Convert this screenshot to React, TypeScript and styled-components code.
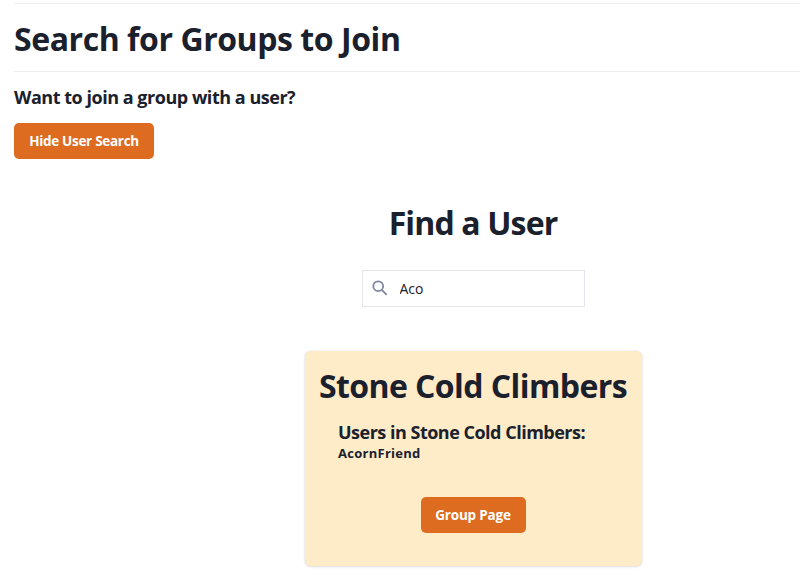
import React, { useState } from "react";
import styled, { createGlobalStyle } from "styled-components";

const fontStack = `"Segoe UI", "Open Sans", "Noto Sans", sans-serif`;

const GlobalStyle = createGlobalStyle`
  *, *::before, *::after { box-sizing: border-box; }
  body {
    margin: 0;
    background: #fff;
    color: #1a202c;
    font-family: ${fontStack};
  }
  h1, h3, p { margin: 0; }
`;

const Page = styled.main`
  min-height: 588px;
  padding: 3px 0 0 14px;
`;

const TitleBar = styled.header`
  height: 69px;
  padding-top: 13px;
  border-top: 1px solid #eeeff1;
  border-bottom: 1px solid #eeeff1;
`;

const Heading = styled.h1<{ $tracking: number }>`
  font-size: 32px;
  line-height: 43px;
  font-weight: 700;
  letter-spacing: ${(p) => p.$tracking}px;
  white-space: nowrap;
`;

const SubHeading = styled.h3<{ $tracking: number }>`
  font-size: 18px;
  line-height: 24px;
  font-weight: 700;
  letter-spacing: ${(p) => p.$tracking}px;
  white-space: nowrap;
`;

const Prompt = styled.section`
  display: flex;
  flex-direction: column;
  align-items: flex-start;
  gap: 14px;
  padding-top: 13px;
`;

const Button = styled.button<{ $width: number; $tracking: number }>`
  width: ${(p) => p.$width}px;
  height: 36px;
  padding: 0;
  border: 0;
  border-radius: 5px;
  background: #dd6b20;
  color: #fff;
  font: 700 13.5px/20px ${fontStack};
  letter-spacing: ${(p) => p.$tracking}px;
  white-space: nowrap;
`;

const Finder = styled.section`
  display: flex;
  flex-direction: column;
  align-items: center;
  padding: 42px 0 0 132px;
`;

const SearchBox = styled.label`
  display: flex;
  align-items: center;
  width: 223px;
  height: 37px;
  margin-top: 26px;
  padding-left: 9px;
  gap: 12px;
  border: 1px solid #e2e5ea;
`;

const SearchIcon = styled.svg`
  width: 16px;
  height: 16px;
  margin-top: -2px;
  fill: none;
  stroke: #7c859a;
  stroke-width: 1.8;
`;

const SearchInput = styled.input`
  width: 170px;
  border: 0;
  outline: 0;
  padding: 0;
  color: #1a202c;
  font: 14px/20px ${fontStack};
`;

const Card = styled.article`
  display: flex;
  flex-direction: column;
  align-items: center;
  width: 337px;
  height: 215px;
  margin-top: 44px;
  padding-top: 13px;
  border-radius: 6px;
  background: #feebc8;
  box-shadow: 0 1px 3px rgba(0, 0, 0, 0.1), 0 0 2px rgba(0, 0, 0, 0.12);
`;

const Members = styled.div`
  width: 270px;
  margin: 13px 0 35px;
`;

const Member = styled.p`
  font-size: 13px;
  line-height: 18px;
  font-weight: 700;
  letter-spacing: 0.27px;
`;

export default function App() {
  const [query, setQuery] = useState("Aco");
  return (
    <Page>
      <GlobalStyle />
      <TitleBar>
        <Heading $tracking={-0.44}>Search for Groups to Join</Heading>
      </TitleBar>
      <Prompt>
        <SubHeading $tracking={-0.47}>Want to join a group with a user?</SubHeading>
        <Button $width={140} $tracking={-0.3}>Hide User Search</Button>
      </Prompt>
      <Finder>
        <Heading $tracking={-0.85}>Find a User</Heading>
        <SearchBox>
          <SearchIcon viewBox="0 0 16 16">
            <circle cx="6.2" cy="6.2" r="4.9" />
            <path d="M9.8 9.8l4.9 5" />
          </SearchIcon>
          <SearchInput value={query} onChange={(e) => setQuery(e.target.value)} />
        </SearchBox>
        <Card>
          <Heading $tracking={-0.57}>Stone Cold Climbers</Heading>
          <Members>
            <SubHeading $tracking={-0.5}>Users in Stone Cold Climbers:</SubHeading>
            <Member>AcornFriend</Member>
          </Members>
          <Button $width={105} $tracking={-0.2}>Group Page</Button>
        </Card>
      </Finder>
    </Page>
  );
}
